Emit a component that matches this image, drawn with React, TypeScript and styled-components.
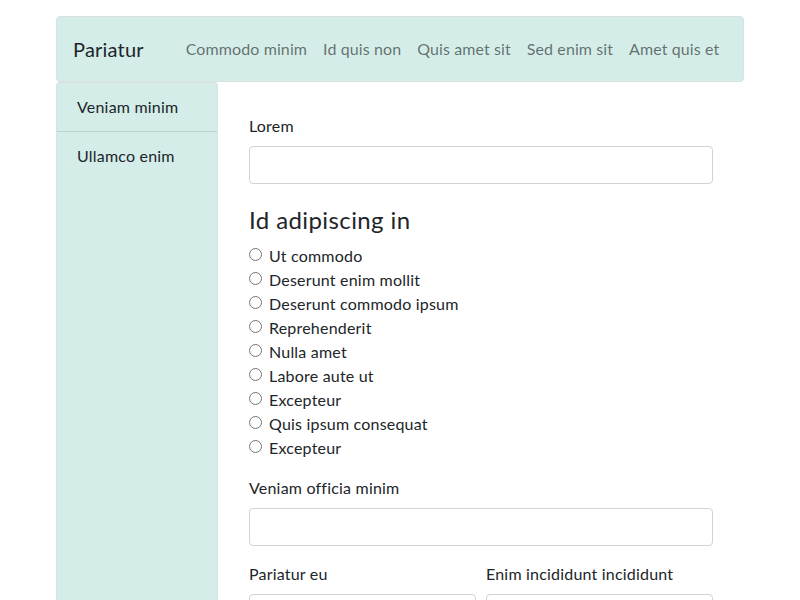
import React from 'react'
import styled, { createGlobalStyle } from 'styled-components'

const GlobalStyle = createGlobalStyle`
  * { box-sizing: border-box; }
  body {
    margin: 0;
    font-family: Lato, "Noto Sans", sans-serif;
    font-size: 16px;
    line-height: 1.5;
    letter-spacing: 0.2px;
    color: #212529;
    background: #fff;
  }
`

const Container = styled.div`
  width: 688px;
  margin: 0 auto;
  padding-top: 16px;
`

const Navbar = styled.nav`
  height: 66px;
  display: flex;
  align-items: center;
  padding: 0 16px;
  background: #d4ede9;
  border: 1px solid #d9e2e1;
  border-radius: 4px;
`

const Brand = styled.div`
  font-size: 20px;
  margin-right: 34px;
  white-space: nowrap;
`

const NavLinks = styled.div`
  display: flex;
`

const NavLink = styled.a`
  padding: 0 8px;
  color: rgba(0, 0, 0, 0.55);
  text-decoration: none;
  white-space: nowrap;
  letter-spacing: 0.1px;
`

const Body = styled.div`
  display: flex;
  align-items: flex-start;
`

const Sidebar = styled.aside`
  width: 162px;
  min-height: 520px;
  background: #d4ede9;
  border: 1px solid #d9e2e1;
  border-bottom: none;
  border-radius: 4px 4px 0 0;
  flex-shrink: 0;
`

const SideItem = styled.div<{ last?: boolean }>`
  padding: 12px 20px;
  border-bottom: 1px solid ${(p) => (p.last ? 'transparent' : '#b9d2ce')};
`

const Main = styled.main`
  flex: 1;
  padding: 32px 31px 0 31px;
`

const Field = styled.div<{ gapBelow?: number }>`
  margin-bottom: ${(p) => p.gapBelow ?? 22}px;
`

const Label = styled.label`
  display: block;
  margin-bottom: 8px;
`

const Input = styled.input`
  display: block;
  width: 100%;
  height: 38px;
  border: 1px solid #ced4da;
  border-radius: 4px;
  font: inherit;
  padding: 6px 12px;
`

const Heading = styled.h4`
  font-size: 24px;
  font-weight: 400;
  line-height: 1.2;
  letter-spacing: 0.4px;
  margin: 0 0 9px;
`

const RadioList = styled.div`
  margin-bottom: 16px;
`

const RadioRow = styled.label`
  display: flex;
  align-items: center;
  gap: 7px;
`

const Radio = styled.input`
  width: 13px;
  height: 13px;
  margin: 0;
  position: relative;
  top: -1px;
`

const Row = styled.div`
  display: grid;
  grid-template-columns: 1fr 1fr;
  gap: 10px;
`

const RowField = styled.div``

const links = ['Commodo minim', 'Id quis non', 'Quis amet sit', 'Sed enim sit', 'Amet quis et']
const options = [
  'Ut commodo',
  'Deserunt enim mollit',
  'Deserunt commodo ipsum',
  'Reprehenderit',
  'Nulla amet',
  'Labore aute ut',
  'Excepteur',
  'Quis ipsum consequat',
  'Excepteur',
]

export default function App() {
  return (
    <>
      <GlobalStyle />
      <Container>
        <Navbar>
          <Brand>Pariatur</Brand>
          <NavLinks>
            {links.map((l) => (
              <NavLink key={l} href="#">
                {l}
              </NavLink>
            ))}
          </NavLinks>
        </Navbar>
        <Body>
          <Sidebar>
            <SideItem>Veniam minim</SideItem>
            <SideItem last>Ullamco enim</SideItem>
          </Sidebar>
          <Main>
            <Field>
              <Label>Lorem</Label>
              <Input type="text" />
            </Field>
            <Heading>Id adipiscing in</Heading>
            <RadioList>
              {options.map((o, i) => (
                <RadioRow key={i}>
                  <Radio type="radio" name="opt" />
                  {o}
                </RadioRow>
              ))}
            </RadioList>
            <Field gapBelow={16}>
              <Label>Veniam officia minim</Label>
              <Input type="text" />
            </Field>
            <Row>
              <RowField>
                <Label>Pariatur eu</Label>
                <Input type="text" />
              </RowField>
              <RowField>
                <Label>Enim incididunt incididunt</Label>
                <Input type="text" />
              </RowField>
            </Row>
          </Main>
        </Body>
      </Container>
    </>
  )
}
